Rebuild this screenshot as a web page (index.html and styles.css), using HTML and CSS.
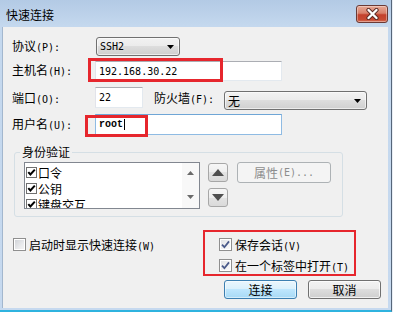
FILE: index.html
```html
<!DOCTYPE html>
<html>
<head>
<meta charset="utf-8">
<title>快速连接</title>
<link rel="stylesheet" href="styles.css">
</head>
<body>
<div class="window">
  <div class="titlebar">
    <span class="title">快速连接</span>
    <span class="close">
      <svg width="17" height="12" viewBox="0 0 17 12"><path d="M4.5 2 L12.5 10 M12.5 2 L4.5 10" stroke="#5a2a24" stroke-width="4.2" stroke-linecap="round"/><path d="M4.5 2 L12.5 10 M12.5 2 L4.5 10" stroke="#ffffff" stroke-width="2.4" stroke-linecap="round"/></svg>
    </span>
  </div>
  <div class="panel">
    <div class="row row-proto">
      <span class="lbl">协议<span class="a">(P):</span></span>
      <div class="combo combo-proto"><span class="val a">SSH2</span><svg class="drop" width="7" height="4" viewBox="0 0 7 4"><path d="M0 0H7L3.5 4Z" fill="#000"/></svg></div>
    </div>
    <div class="row row-host">
      <span class="lbl">主机名<span class="a">(H):</span></span>
      <div class="input input-host"><span class="a">192.168.30.22</span></div>
    </div>
    <div class="row row-port">
      <span class="lbl">端口<span class="a">(O):</span></span>
      <div class="input input-port"><span class="a">22</span></div>
      <span class="lbl lbl-fw">防火墙<span class="a">(F):</span></span>
      <div class="combo combo-fw"><span class="val">无</span><svg class="drop" width="7" height="4" viewBox="0 0 7 4"><path d="M0 0H7L3.5 4Z" fill="#000"/></svg></div>
    </div>
    <div class="row row-user">
      <span class="lbl">用户名<span class="a">(U):</span></span>
      <div class="input input-user focused"><span class="a bold">root</span><span class="caret"></span></div>
    </div>

    <fieldset class="group">
      <legend>身份验证</legend>
      <div class="group-inner">
        <div class="listbox">
          <div class="items">
            <div class="item"><span class="lcb"><svg width="9" height="9" viewBox="0 0 9 9"><path d="M1.3 4.2 L3.4 6.5 L7.8 1.6" stroke="#000" stroke-width="2" fill="none"/></svg></span><span>口令</span></div>
            <div class="item"><span class="lcb"><svg width="9" height="9" viewBox="0 0 9 9"><path d="M1.3 4.2 L3.4 6.5 L7.8 1.6" stroke="#000" stroke-width="2" fill="none"/></svg></span><span>公钥</span></div>
            <div class="item"><span class="lcb"><svg width="9" height="9" viewBox="0 0 9 9"><path d="M1.3 4.2 L3.4 6.5 L7.8 1.6" stroke="#000" stroke-width="2" fill="none"/></svg></span><span>键盘交互</span></div>
          </div>
          <div class="vscroll">
            <svg width="7" height="4" viewBox="0 0 7 4"><path d="M0 4H7L3.5 0Z" fill="#6a6a6a"/></svg>
            <svg width="7" height="4" viewBox="0 0 7 4"><path d="M0 0H7L3.5 4Z" fill="#6a6a6a"/></svg>
          </div>
        </div>
        <div class="updown">
          <span class="ubtn"><svg width="12" height="7" viewBox="0 0 12 7"><path d="M0 7H12L6 0Z" fill="#4f4f4f"/></svg></span>
          <span class="ubtn"><svg width="12" height="7" viewBox="0 0 12 7"><path d="M0 0H12L6 7Z" fill="#4f4f4f"/></svg></span>
        </div>
        <span class="btn disabled btn-prop">属性<span class="a">(E)...</span></span>
      </div>
    </fieldset>

    <div class="bottom">
      <div class="bottom-left">
        <label class="check"><span class="cb"></span><span>启动时显示快速连接<span class="a">(W)</span></span></label>
      </div>
      <div class="bottom-right">
        <label class="check"><span class="cb checked"><svg width="11" height="11" viewBox="0 0 11 11"><path d="M2 5.6 L4.4 8.2 L9 2.4" stroke="#4a5a8a" stroke-width="1.8" fill="none"/></svg></span><span>保存会话<span class="a">(V)</span></span></label>
        <label class="check check2"><span class="cb checked"><svg width="11" height="11" viewBox="0 0 11 11"><path d="M2 5.6 L4.4 8.2 L9 2.4" stroke="#4a5a8a" stroke-width="1.8" fill="none"/></svg></span><span>在一个标签中打开<span class="a">(T)</span></span></label>
        <div class="buttons">
          <span class="btn btn-default">连接</span>
          <span class="btn">取消</span>
        </div>
      </div>
    </div>
  </div>

  <div class="mark mark-host"></div>
  <div class="mark mark-user"></div>
  <div class="mark mark-opts"></div>
</div>
</body>
</html>
```

FILE: styles.css
```css
* { box-sizing: border-box; }
html, body { margin: 0; padding: 0; }
body {
  width: 393px;
  height: 312px;
  overflow: hidden;
  background: #e8eef5;
  font-family: "Noto Sans CJK SC", "Noto Sans CJK JP", sans-serif;
  font-size: 12px;
  color: #000;
}
.a { font-family: "DejaVu Sans Mono", monospace; font-size: 10px; }
.bold { font-family: "Liberation Mono", monospace; font-weight: bold; font-size: 10px; }

.window {
  position: relative;
  width: 392px;
  height: 312px;
  display: flex;
  flex-direction: column;
  padding: 0 3px 2px 3px;
  background: linear-gradient(#b3cae5 0px, #c4d8ee 26px, #c6d9ef 100%);
  border-right: 1px solid #56667a;
  border-bottom: 2px solid #2fb3df;
}

.titlebar {
  height: 27px;
  flex: none;
  display: flex;
  align-items: flex-start;
  padding-left: 3px;
}
.title { margin-top: 7px; line-height: 16px; }
.close {
  margin-left: auto;
  margin-top: 5px;
  width: 32px;
  height: 18px;
  border: 1px solid #6b3a35;
  border-radius: 3px;
  background: linear-gradient(#e7a895 0%, #d8806a 45%, #c3412c 55%, #c74a32 85%, #d9755c 100%);
  box-shadow: inset 0 0 0 1px rgba(255,255,255,0.35);
  display: flex;
  align-items: center;
  justify-content: center;
}

.panel {
  flex: 1;
  background: #f0f0f0;
  padding-left: 9px;
  box-shadow: -1px 0 0 #a3b7ce;
}

.row { display: flex; align-items: center; }
.lbl { width: 83px; flex: none; white-space: nowrap; line-height: 16px; }
.row-proto { margin-top: 10px; height: 19px; }
.row-host { margin-top: 5px; height: 20px; }
.row-port { margin-top: 6px; height: 22px; align-items: flex-start; }
.row-port .lbl { line-height: 21px; }
.row-user { margin-top: 5px; height: 21px; }

.combo {
  display: flex;
  align-items: center;
  height: 19px;
  border: 1px solid #707070;
  border-radius: 3px;
  background: linear-gradient(#f2f2f2 0%, #ebebeb 50%, #dddddd 50%, #cfcfcf 100%);
  padding: 0 5px 0 3px;
  box-shadow: inset 0 0 0 1px rgba(255,255,255,0.6);
}
.combo .val { flex: 1; }
.combo-proto { width: 84px; margin-left: 1px; }
.combo-fw { width: 143px; margin-top: 4px; }
.lbl-fw { width: 70px; margin-left: 11px; }

.input {
  display: flex;
  align-items: center;
  background: #fff;
  border: 1px solid #e3e9ef;
  border-top-color: #abadb3;
  border-left-color: #e2e3ea;
  padding-left: 3px;
}
.input-host { width: 187px; height: 20px; }
.input-port { width: 48px; height: 21px; }
.input-user { width: 187px; height: 21px; }
.focused { border-color: #8fbbe3; border-top-color: #6fa6d6; }
.caret { width: 1px; height: 11px; background: #000; margin-left: 1px; }

.group {
  margin: 10px 0 0 2px;
  width: 329px;
  border: 1px solid #d5dfe5;
  border-radius: 3px;
  padding: 3px 9px 7px 9px;
  min-width: 0;
}
.group legend {
  margin-left: -4px;
  padding: 0 2px;
  line-height: 14px;
}
.group-inner { display: flex; align-items: flex-start; }

.listbox {
  width: 176px;
  height: 47px;
  border: 1px solid #828790;
  background: #fff;
  display: flex;
  overflow: hidden;
}
.items { flex: 1; padding-top: 1px; }
.item { height: 16px; display: flex; align-items: center; white-space: nowrap; }
.lcb {
  width: 11px;
  height: 11px;
  margin: 0 1px 0 1px;
  border: 1px solid #707070;
  background: #fff;
  display: flex;
  align-items: center;
  justify-content: center;
}
.vscroll {
  width: 17px;
  background: #f8f8f8;
  display: flex;
  flex-direction: column;
  align-items: center;
  justify-content: space-between;
  padding: 8px 0 9px;
}

.updown { display: flex; flex-direction: column; gap: 6px; margin: 1px 0 0 8px; }
.ubtn {
  width: 20px;
  height: 19px;
  border: 1px solid #a7a7a7;
  border-radius: 3px;
  background: linear-gradient(#f6f6f6 0%, #eeeeee 50%, #e3e3e3 50%, #dadada 100%);
  display: flex;
  align-items: center;
  justify-content: center;
}

.btn {
  display: flex;
  align-items: center;
  justify-content: center;
  height: 19px;
  width: 73px;
  border: 1px solid #707070;
  border-radius: 3px;
  background: linear-gradient(#f2f2f2 0%, #ebebeb 50%, #dddddd 50%, #cfcfcf 100%);
  box-shadow: inset 0 0 0 1px rgba(255,255,255,0.7);
  white-space: nowrap;
}
.btn-prop { width: 94px; height: 21px; margin-left: 9px; }
.disabled {
  color: #8d8d8d;
  border-color: #adb2b5;
  background: #f4f4f4;
  box-shadow: none;
}
.btn-default {
  border-color: #3c7fb1;
  background: linear-gradient(#eaf6fd 0%, #d9f0fc 50%, #bee6fd 50%, #a7d9f5 100%);
  box-shadow: inset 0 0 0 1px rgba(255,255,255,0.5);
}

.bottom { display: flex; margin-top: 19px; }
.bottom-left { width: 207px; }
.check { display: flex; align-items: center; height: 16px; white-space: nowrap; }
.bottom-left .check { margin-left: 1px; }
.check2 { margin-top: 5px; }
.cb {
  width: 13px;
  height: 13px;
  flex: none;
  margin-right: 3px;
  border: 1px solid #8f8f8f;
  background: linear-gradient(135deg, #cdd0d5 0%, #e9eaec 60%, #f6f6f6 100%);
  box-shadow: inset 0 0 0 1px #fff;
  display: flex;
  align-items: center;
  justify-content: center;
}
.cb.checked { background: linear-gradient(135deg, #dfe1e4 0%, #f2f2f3 60%, #fbfbfb 100%); }
.buttons { display: flex; gap: 11px; margin: 7px 0 0 5px; }

.mark { position: absolute; border: 3px solid #e6262d; }
.mark-host { left: 88px; top: 58px; width: 135px; height: 24px; }
.mark-user { left: 85px; top: 115px; width: 63px; height: 22px; }
.mark-opts { left: 203px; top: 230px; width: 153px; height: 46px; border-width: 2px; }
```
